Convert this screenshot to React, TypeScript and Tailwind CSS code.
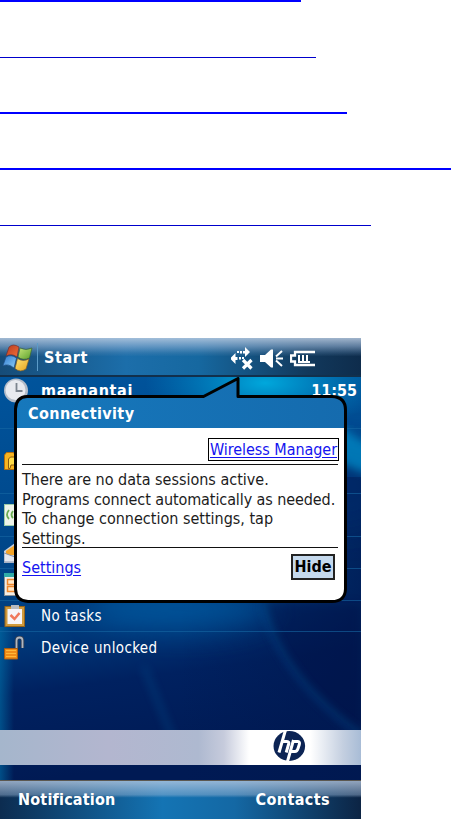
import type { ReactNode } from 'react';

const UI_FONT = "font-['DejaVu_Sans_Condensed','DejaVu_Sans',sans-serif] [font-stretch:condensed]";

function Rules() {
  return (
    <div className="h-[338px]">
      <div className="h-0.5 w-[301px] bg-[#0000ff]" />
      <div className="mt-[55px] h-px w-[316px] bg-[#0000cc]" />
      <div className="mt-[54px] h-0.5 w-[347px] bg-[#0000ff]" />
      <div className="mt-[54px] h-0.5 w-[451px] bg-[#0000ff]" />
      <div className="mt-[55px] h-px w-[371px] bg-[#0000cc]" />
    </div>
  );
}

function WindowsLogo() {
  return (
    <svg width="31" height="28" viewBox="0 0 31 28">
      <defs>
        <linearGradient id="red" x2="1" y2="1">
          <stop offset="0" stopColor="#b53a20" />
          <stop offset="1" stopColor="#f4703a" />
        </linearGradient>
        <linearGradient id="green" x2="1" y2="1">
          <stop offset="0" stopColor="#c6e678" />
          <stop offset="1" stopColor="#5aa02c" />
        </linearGradient>
        <linearGradient id="blue" x2="1" y2="1">
          <stop offset="0" stopColor="#2f7ad0" />
          <stop offset="1" stopColor="#8fd0f8" />
        </linearGradient>
        <linearGradient id="yellow" x2="1" y2="1">
          <stop offset="0" stopColor="#ffe478" />
          <stop offset="1" stopColor="#e8a41c" />
        </linearGradient>
      </defs>
      <path d="M7 3Q11-1 17 3L15 13Q10 9 4 12Z" fill="url(#red)" stroke="#6b3238" strokeWidth=".7" />
      <path d="M18 4Q24 7 30 4L27.500 14Q21 17 16 13Z" fill="url(#green)" stroke="#3c6430" strokeWidth=".7" />
      <path d="M4 13Q9 10 14.500 14L12 24Q6 19 .8 22Z" fill="url(#blue)" stroke="#1c4c84" strokeWidth=".7" />
      <path d="M15.500 14.500Q21 18 27 15L24 25Q18 29 13 24.500Z" fill="url(#yellow)" stroke="#80602c" strokeWidth=".7" />
    </svg>
  );
}

function ConnectionIcon() {
  return (
    <svg width="24" height="24" viewBox="0 0 24 24" fill="white">
      <path d="M9 4h2v2.500H9zM12 4h2V0l5 5-5 5V6.500h-2zM6 4h2v2H6z" />
      <path d="M-1 11.500L4.500 6v4h2v3h-2v4zM8 10h2v2.500H8zM11 10h2v2h-2z" />
      <path d="M12 13l8.500 8.500M20.500 13L12 21.500" stroke="white" strokeWidth="3.200" />
    </svg>
  );
}

function SpeakerIcon() {
  return (
    <svg width="23" height="19" viewBox="0 0 23 19" fill="white">
      <path d="M0 6h5l6-5.500h2v18h-2L5 13H0z" />
      <path d="M16 7.500l6-5.500M16 9.500h7M16 11.500l6 5.500" stroke="white" strokeWidth="2" />
    </svg>
  );
}

function BatteryIcon() {
  return (
    <svg width="25" height="17" viewBox="0 0 25 17" fill="none" stroke="white" strokeWidth="2">
      <path d="M25 2H5v3.500H1v6h4V15h20" strokeWidth="2.300" />
      <path d="M9 5v8M13 5v8M17 5v8M8 12h12" />
    </svg>
  );
}

function TopBar() {
  return (
    <header className="flex h-[39px] items-center border-b-2 border-[#12304c] bg-[linear-gradient(180deg,rgba(186,204,226,.85)_0,rgba(150,180,214,.6)_22%,rgba(110,150,190,.25)_40%,transparent_50%),linear-gradient(90deg,#164c78_0,#1c6eaa_35%,#1668a0_55%,#12395c_85%,#0e2c4c_100%)]">
      <div className="w-[37px] pt-0.5 pl-0.5">
        <WindowsLogo />
      </div>
      <div className="h-7 w-px bg-[#5b9bc8]" />
      <span className="mt-0.5 ml-1.5 text-base font-bold tracking-[.6px] text-white">Start</span>
      <div className="mt-1 ml-auto flex items-center gap-[5px] pr-[46px]">
        <ConnectionIcon />
        <SpeakerIcon />
        <div className="pl-0.5">
          <BatteryIcon />
        </div>
      </div>
    </header>
  );
}

function Wallpaper() {
  return (
    <svg className="absolute inset-0" width="361" height="403" viewBox="0 0 361 403">
      <defs>
        <linearGradient id="base" x2=".12" y2="1">
          <stop offset="0" stopColor="#00549c" />
          <stop offset=".5" stopColor="#004486" />
          <stop offset=".64" stopColor="#003a7c" />
          <stop offset=".78" stopColor="#002160" />
          <stop offset="1" stopColor="#001a54" />
        </linearGradient>
        <radialGradient id="glow">
          <stop offset="0" stopColor="#00a8dc" />
          <stop offset="1" stopColor="#0090cc" stopOpacity="0" />
        </radialGradient>
        <linearGradient id="shade">
          <stop offset="0" stopColor="#001850" stopOpacity="0" />
          <stop offset="1" stopColor="#001850" stopOpacity=".75" />
        </linearGradient>
        <linearGradient id="edge">
          <stop offset="0" stopColor="#0070a8" stopOpacity=".6" />
          <stop offset="1" stopColor="#0070a8" stopOpacity="0" />
        </linearGradient>
        <filter id="soft" x="-50%" y="-50%" width="200%" height="200%">
          <feGaussianBlur stdDeviation="4" />
        </filter>
        <filter id="haze" x="-30%" y="-100%" width="160%" height="300%">
          <feGaussianBlur stdDeviation="14" />
        </filter>
      </defs>
      <rect width="361" height="403" fill="url(#base)" />
      <rect x="180" y="100" width="181" height="303" fill="url(#shade)" />
      <ellipse cx="345" cy="110" rx="50" ry="45" fill="#002c6c" opacity=".6" filter="url(#haze)" />
      <ellipse cx="265" cy="6" rx="120" ry="48" fill="url(#glow)" />
      <path d="M320 30Q350 60 375 70V98Q346 92 325 75Z" fill="#0090cc" opacity=".7" filter="url(#soft)" />
      <ellipse cx="180" cy="232" rx="90" ry="22" fill="#0068b0" opacity=".5" filter="url(#haze)" />
      <path d="M262 226Q280 300 361 358V226Z" fill="#001040" opacity=".3" filter="url(#soft)" />
      <path d="M262 226Q280 300 361 358" fill="none" stroke="#0864a4" strokeWidth="4" opacity=".5" filter="url(#soft)" />
      <path d="M144 290Q158 325 176 370" fill="none" stroke="#0c64a0" strokeWidth="4" opacity=".4" filter="url(#soft)" />
      <rect y="250" width="14" height="153" fill="url(#edge)" />
    </svg>
  );
}

function ClockIcon() {
  return (
    <svg width="25" height="25" viewBox="0 0 25 25">
      <circle cx="12" cy="12.500" r="12" fill="#b4bcc8" />
      <circle cx="11.500" cy="12" r="10" fill="#e8eaef" />
      <path d="M12.500 5v8h6" fill="none" stroke="#7c848e" strokeWidth="1.800" />
    </svg>
  );
}

function FolderIcon() {
  return (
    <svg width="22" height="18" viewBox="0 0 22 18">
      <path d="M.5 3l2-2.500h7l2 3h10v14H.5z" fill="#f8b420" stroke="#b06c10" />
      <path d="M4.500 16.500V7l2-2H20v8H7l-1 3.500z" fill="#ffdc48" stroke="#8c5a10" />
    </svg>
  );
}

function SignalIcon() {
  return (
    <svg width="22" height="22" viewBox="0 0 22 22">
      <rect x=".5" y=".5" width="21" height="21" fill="#eef4ea" stroke="#9ccca8" />
      <path d="M5 6q-4 5 0 9M9 7q-3 4 0 7" fill="none" stroke="#6cae54" strokeWidth="1.800" />
    </svg>
  );
}

function MailIcon() {
  return (
    <svg width="22" height="20" viewBox="0 0 22 20">
      <path d="M0 8L11 0l11 8v12H0z" fill="#c8d0dc" />
      <path d="M2 8l9-6 9 6v4H2z" fill="#f4a428" />
      <path d="M0 10l11 4 11-4v9H0z" fill="#e4e8f0" stroke="#8894ac" />
    </svg>
  );
}

function CalendarIcon() {
  return (
    <svg width="22" height="23" viewBox="0 0 22 23">
      <rect x=".5" y=".5" width="21" height="22" fill="#f2ede6" stroke="#8c9094" />
      <path d="M0 0h22v4H0z" fill="#30aca8" />
      <path d="M3.500 6.500h15v5h-15zM3.500 13.500h15v5h-15z" fill="#ffe7c8" stroke="#f0882c" strokeWidth="1.500" />
    </svg>
  );
}

function TasksIcon() {
  return (
    <svg width="22" height="23" viewBox="0 0 22 23">
      <rect x="1" y="1.500" width="19.500" height="20" fill="#d09a3c" stroke="#94641c" />
      <path d="M3.500 4h14.500v15H3.500z" fill="#f6f4f8" />
      <path d="M7 0h8v4H7z" fill="#b8bcc0" />
      <path d="M6.500 10l4 4 5-6" fill="none" stroke="#f0785c" strokeWidth="2.500" />
    </svg>
  );
}

function UnlockIcon() {
  return (
    <svg width="21" height="24" viewBox="0 0 21 24">
      <path d="M12.500 12V4.500q0-3 3-3t3 3V12" fill="none" stroke="#303c50" strokeWidth="3.500" />
      <path d="M12.500 12V4.500q0-3 3-3t3 3V12" fill="none" stroke="#b0b6c0" strokeWidth="1.800" />
      <path d="M.5 12.500h13v10.500H.5z" fill="#f08c18" stroke="#a85c10" />
      <path d="M2 14.500h10M2 17.500h10M2 20.500h10" stroke="#ffb838" />
    </svg>
  );
}

type RowProps = { className: string; icon: ReactNode; children?: ReactNode };

function Row({ className, icon, children }: RowProps) {
  return (
    <div className={`flex pl-1 text-white ${className}`}>
      <div className="flex w-[37px]">{icon}</div>
      {children}
    </div>
  );
}

function HpLogo() {
  return (
    <svg className="mr-[55px]" width="33" height="35" viewBox="0 0 33 35">
      <ellipse cx="16.300" cy="16" rx="15.800" ry="15" fill="#0c2454" />
      <path d="M12.500 0L6 22.500M9.500 11.500h4.500q2.500 0 1.500 3l-2.300 8" fill="none" stroke="white" strokeWidth="3" />
      <path d="M20.500 10l-7 25M19.500 11.500h5.500q2 0 1.300 3l-1.300 4q-1 3-3 3h-5" fill="none" stroke="white" strokeWidth="3" />
    </svg>
  );
}

const OUTLINE =
  'M14 19.500H190.500L225 1.500V19.500H319Q332.500 20 332.500 33V212Q332 224.500 319 224.500H15Q3 224 2.500 212V32Q3 20 14 19.500Z';

function Balloon() {
  return (
    <section className="absolute top-0 left-[13px] h-[227px] w-[334px] text-black">
      <svg className="absolute inset-0" width="334" height="227" viewBox="0 0 334 227">
        <defs>
          <linearGradient id="title">
            <stop offset="0" stopColor="#1678bc" />
            <stop offset="1" stopColor="#156bae" />
          </linearGradient>
          <clipPath id="titleClip">
            <path d="M0 0h334v51H0z" />
          </clipPath>
        </defs>
        <path d={OUTLINE} fill="white" />
        <path d={OUTLINE} fill="url(#title)" clipPath="url(#titleClip)" />
        <path d={OUTLINE} fill="none" stroke="black" strokeWidth="3" strokeLinejoin="round" />
      </svg>
      <div className="relative flex h-full flex-col px-[9px] pt-[21px]">
        <h1 className="h-[30px] pl-1.5 text-base leading-[32px] font-bold tracking-[.4px] text-white">Connectivity</h1>
        <div className="flex h-[37px] items-start justify-end border-b border-[#111] pt-[10px]">
          <a className="-mr-px flex h-[23px] w-[131px] items-center justify-center border border-black text-base leading-5 tracking-[-.05px] whitespace-nowrap text-[#1414f0] underline underline-offset-2">
            Wireless Manager
          </a>
        </div>
        <div className="h-[83px] border-b border-[#111] pt-[5px] text-base leading-[19.500px] whitespace-nowrap text-[#1c1c1c]">
          <p>There are no data sessions active.</p>
          <p className="tracking-[-.09px]">Programs connect automatically as needed.</p>
          <p>To change connection settings, tap</p>
          <p>Settings.</p>
        </div>
        <div className="flex justify-between pt-1.5 pr-[3px]">
          <a className="text-base leading-[28px] text-[#1414f0] underline underline-offset-2">Settings</a>
          <button className="flex h-[26px] w-11 items-center justify-center border-2 border-[#222] bg-[#c5d9ed] text-base font-bold">
            Hide
          </button>
        </div>
      </div>
    </section>
  );
}

export default function App() {
  return (
    <main className={`h-[819px] w-[451px] overflow-hidden bg-white ${UI_FONT}`}>
      <Rules />
      <div className="flex h-[481px] w-[361px] flex-col overflow-hidden">
        <TopBar />
        <div className="relative h-[403px]">
          <Wallpaper />
          <div className="relative flex h-full flex-col">
            <div className="divide-y divide-[#1668a4]/60">
              <Row className="h-[52px] items-start pt-px pr-1" icon={<ClockIcon />}>
                <span className="text-base leading-[25px] font-bold tracking-[.65px]">maanantai</span>
                <span className="ml-auto text-base leading-[25px] font-bold">11:55</span>
              </Row>
              <Row className="h-[65px] items-center" icon={<FolderIcon />} />
              <Row className="h-[43px] items-center" icon={<SignalIcon />} />
              <Row className="h-8 items-center" icon={<MailIcon />} />
              <Row className="h-8 items-center" icon={<CalendarIcon />} />
              <Row className="h-[31px] items-center" icon={<TasksIcon />}>
                <span className="text-[15px] tracking-[.35px]">No tasks</span>
              </Row>
              <Row className="h-8 items-center" icon={<UnlockIcon />}>
                <span className="text-[15px] tracking-[.35px]">Device unlocked</span>
              </Row>
            </div>
            <div className="mt-auto mb-[15px] flex h-[35px] justify-end bg-[linear-gradient(90deg,#a5b6cc_0,#b3b6cf_30%,#aeb9d0_55%,#c6cbdc_62%,#fff_69%,#fff_86%,#c4cfe0_95%,#a8bcd6_100%)]">
              <HpLogo />
            </div>
          </div>
          <Balloon />
        </div>
        <footer className="flex h-[39px] items-center justify-between border-t border-[#5c5850] bg-[linear-gradient(180deg,rgba(190,206,228,.75)_0,rgba(160,186,216,.45)_36%,rgba(160,186,216,0)_44%),linear-gradient(90deg,#0c2c50_0,#1474b4_45%,#1468a4_65%,#0c2444_100%)] pr-[31px] pl-[18px] text-base font-bold text-white">
          <span className="tracking-[.2px]">Notification</span>
          <span className="tracking-[.4px]">Contacts</span>
        </footer>
      </div>
    </main>
  );
}
